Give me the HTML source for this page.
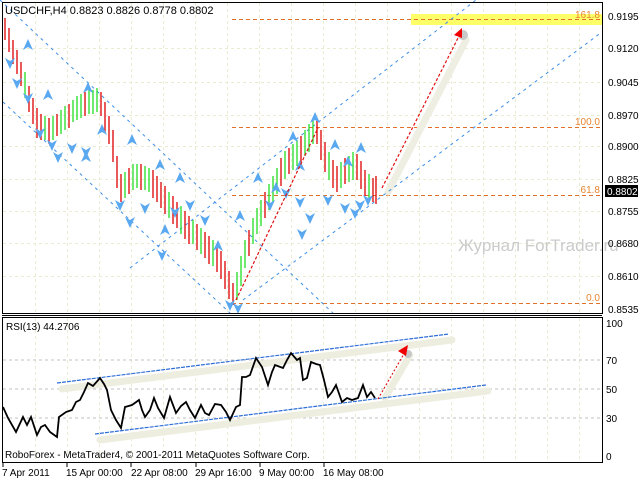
<!DOCTYPE html>
<html><head><meta charset="utf-8"><style>
html,body{margin:0;padding:0;background:#fff;width:640px;height:480px;overflow:hidden}
svg{display:block;font-family:"Liberation Sans",sans-serif}
</style></head><body>
<svg width="640" height="480" viewBox="0 0 640 480" xmlns="http://www.w3.org/2000/svg" xmlns:xlink="http://www.w3.org/1999/xlink">
<defs>
<polygon id="u" points="-5,5 0,-6 5,5 0,2" fill="#5aa8f0"/>
<polygon id="d" points="-5,-5 0,6 5,-5 0,-2" fill="#5aa8f0"/>
</defs>
<rect width="640" height="480" fill="#fff"/>
<g stroke="#ebebd2" stroke-dasharray="3,3" stroke-width="1" fill="none">
<path d="M3 48.5H602M3 82.5H602M3 115.5H602M3 146.5H602M3 179.5H602M3 211.5H602M3 243.5H602M3 276.5H602"/>
<path d="M35.5 3V313M67.5 3V313M99.5 3V313M131.5 3V313M163.5 3V313M195.5 3V313M227.5 3V313M259.5 3V313M291.5 3V313M323.5 3V313M355.5 3V313M387.5 3V313M419.5 3V313M451.5 3V313M483.5 3V313M515.5 3V313M547.5 3V313M579.5 3V313"/>
<path d="M35.5 318V462M67.5 318V462M99.5 318V462M131.5 318V462M163.5 318V462M195.5 318V462M227.5 318V462M259.5 318V462M291.5 318V462M323.5 318V462M355.5 318V462M387.5 318V462M419.5 318V462M451.5 318V462M483.5 318V462M515.5 318V462M547.5 318V462M579.5 318V462"/>
</g>
<rect x="411" y="14" width="191" height="11" fill="#ffff4d" opacity="0.85"/>
<g stroke="#e0702a" stroke-dasharray="4,3" stroke-width="1">
<line x1="232" y1="19.5" x2="600" y2="19.5"/>
<line x1="232" y1="127.5" x2="600" y2="127.5"/>
<line x1="232" y1="195.5" x2="600" y2="195.5"/>
<line x1="232" y1="303.5" x2="600" y2="303.5"/>
</g>
<g fill="#e8842f" font-size="10" text-anchor="end">
<text x="600" y="18">161.8</text><text x="600" y="125">100.0</text>
<text x="600" y="193">61.8</text><text x="600" y="301">0.0</text>
</g>
<text x="458" y="251" font-size="17" fill="#cbcbcb">Журнал ForTrader.ru</text>
<line x1="388" y1="192" x2="466" y2="40" stroke="#eeeee2" stroke-width="7" stroke-linecap="round"/>
<circle cx="463" cy="35" r="5" fill="#c8c8c8"/>
<g stroke="#3c8ee8" stroke-dasharray="3,4" stroke-width="1" fill="none">
<line x1="0" y1="0" x2="335" y2="315"/>
<line x1="3" y1="102" x2="230" y2="313"/>
<line x1="130" y1="268" x2="476" y2="0"/>
<line x1="243" y1="300" x2="602" y2="32"/>
</g>
<path stroke="#dd0000" stroke-width="1.3" fill="none" d="M5 18V40M9 28V52M13 40V64M17 50V74M21 62V86M29 86V112M33 98V124M37 108V138M41 114V140M49 118V144M57 114V136M69 104V128M85 92V116M101 92V116M105 102V132M109 116V144M113 130V162M117 156V188M121 174V202M129 168V194M141 164V190M153 170V198M157 176V202M161 182V208M165 186V214M173 196V224M177 202V228M185 211V239M189 216V244M197 224V250M205 232V258M209 236V264M217 244V272M221 251V279M225 261V289M229 271V299M233 283V305M249 230V256M265 192V218M281 158V186M289 148V174M301 136V162M317 118V144M321 130V160M325 142V172M333 160V188M337 166V192M345 158V184M357 154V180M361 161V189M365 170V196M373 178V202M376 176V204"/>
<path stroke="#22dd22" stroke-width="1.3" fill="none" d="M25 72V98M45 116V140M53 116V140M61 110V134M65 106V130M73 100V122M77 96V120M81 94V118M89 90V114M93 90V114M97 88V112M125 172V198M133 164V190M137 164V188M145 166V190M149 168V192M169 192V218M181 206V234M193 220V244M201 228V254M213 240V266M237 272V300M241 256V286M245 240V268M253 218V244M257 208V234M261 200V226M269 184V210M273 176V202M277 168V194M285 151V179M293 144V170M297 140V166M305 130V156M309 124V152M313 120V144M329 152V180M341 162V188M349 156V182M353 152V180M369 174V200"/>
<g>
<use xlink:href="#u" x="28" y="45"/><use xlink:href="#u" x="48" y="95"/><use xlink:href="#u" x="88" y="88"/><use xlink:href="#u" x="86" y="157"/><use xlink:href="#u" x="102" y="130"/><use xlink:href="#u" x="132" y="140"/><use xlink:href="#u" x="160" y="165"/><use xlink:href="#u" x="165" y="230"/><use xlink:href="#u" x="180" y="178"/><use xlink:href="#u" x="258" y="178"/><use xlink:href="#u" x="276" y="188"/><use xlink:href="#u" x="300" y="166"/><use xlink:href="#u" x="293" y="137"/><use xlink:href="#u" x="315" y="118"/><use xlink:href="#u" x="335" y="145"/><use xlink:href="#u" x="348" y="162"/><use xlink:href="#u" x="361" y="148"/><use xlink:href="#u" x="218" y="246"/><use xlink:href="#u" x="240" y="216"/>
<use xlink:href="#d" x="10" y="63"/><use xlink:href="#d" x="17" y="83"/><use xlink:href="#d" x="28" y="98"/><use xlink:href="#d" x="40" y="133"/><use xlink:href="#d" x="52" y="145"/><use xlink:href="#d" x="58" y="157"/><use xlink:href="#d" x="72" y="148"/><use xlink:href="#d" x="86" y="152"/><use xlink:href="#d" x="120" y="205"/><use xlink:href="#d" x="130" y="222"/><use xlink:href="#d" x="145" y="208"/><use xlink:href="#d" x="162" y="255"/><use xlink:href="#d" x="175" y="212"/><use xlink:href="#d" x="190" y="205"/><use xlink:href="#d" x="205" y="220"/><use xlink:href="#d" x="230" y="305"/><use xlink:href="#d" x="238" y="308"/><use xlink:href="#d" x="270" y="205"/><use xlink:href="#d" x="286" y="193"/><use xlink:href="#d" x="300" y="202"/><use xlink:href="#d" x="302" y="234"/><use xlink:href="#d" x="310" y="218"/><use xlink:href="#d" x="328" y="200"/><use xlink:href="#d" x="345" y="208"/><use xlink:href="#d" x="355" y="213"/><use xlink:href="#d" x="360" y="205"/><use xlink:href="#d" x="368" y="200"/>
</g>
<g stroke="#e01010" stroke-dasharray="3,2" stroke-width="1.2">
<line x1="236" y1="300" x2="318" y2="128"/>
<line x1="382" y1="188" x2="459" y2="36"/>
</g>
<polygon points="462,28 454,35 462,38" fill="#f00000"/>
<rect x="2.5" y="2.5" width="600" height="311" fill="none" stroke="#000"/>
<line x1="2" y1="315.5" x2="602" y2="315.5" stroke="#000"/>
<text x="5" y="14" font-size="11" fill="#000">USDCHF,H4  0.8823 0.8826 0.8778 0.8802</text>
<g font-size="10" fill="#000">
<text x="608" y="20">0.9195</text><text x="608" y="52">0.9120</text><text x="608" y="86">0.9045</text>
<text x="608" y="119">0.8970</text><text x="608" y="150">0.8900</text><text x="608" y="183">0.8825</text>
<text x="608" y="215">0.8755</text><text x="608" y="247">0.8680</text><text x="608" y="280">0.8610</text>
<text x="608" y="313">0.8535</text>
</g>
<rect x="605" y="185" width="33" height="12" fill="#000"/>
<text x="607" y="195" font-size="10" fill="#fff">0.8802</text>
<rect x="2.5" y="317.5" width="600" height="145" fill="none" stroke="#000"/>
<g stroke="#c0c0c0" stroke-dasharray="3,3"><line x1="3" y1="360" x2="602" y2="360"/><line x1="3" y1="389" x2="602" y2="389"/><line x1="3" y1="418" x2="602" y2="418"/></g>
<g stroke="#eeeee0" stroke-width="7" stroke-linecap="round">
<line x1="62" y1="389" x2="452" y2="340"/>
<line x1="100" y1="440" x2="488" y2="391"/>
<line x1="385" y1="398" x2="410" y2="355"/>
</g>
<circle cx="408" cy="354" r="4" fill="#c8c8c8"/>
<g stroke="#2f6fd8" stroke-dasharray="4,1" stroke-width="1.2">
<line x1="57" y1="383" x2="449" y2="334"/>
<line x1="95" y1="434" x2="486" y2="385"/>
</g>
<polyline fill="none" stroke="#000" stroke-width="1.8" points="3,407 8,418 16,432 23,417 27,425 31,417 37,435 41,427 45,425 50,432 57,437 59,417 66,412 72,410 76,402 80,400 84,392 88,383 93,386 100,378 104,384 107,390 111,410 116,420 121,428 125,407 132,405 139,400 142,410 145,417 150,410 154,398 158,408 164,418 170,397 176,413 181,406 186,402 190,410 195,418 201,405 205,413 209,415 215,404 221,405 226,412 230,420 236,407 240,405 242,377 246,377 250,375 256,358 262,367 268,385 272,372 275,365 283,368 287,360 291,353 297,360 300,358 303,380 307,378 311,362 316,364 320,365 324,380 328,397 332,392 336,385 342,402 347,398 352,400 358,398 363,385 367,397 371,392 375,398"/>
<line x1="378" y1="399" x2="405" y2="352" stroke="#e01010" stroke-dasharray="2,2" stroke-width="1.1"/>
<polygon points="408,345 398,351 406,356" fill="#f00000"/>
<text x="6" y="330" font-size="10">RSI(13) 44.2706</text>
<text x="5" y="458" font-size="10">RoboForex - MetaTrader4, © 2001-2011 MetaQuotes Software Corp.</text>
<g font-size="10"><text x="606" y="327">100</text><text x="606" y="364">70</text><text x="606" y="393">50</text><text x="606" y="422">30</text><text x="606" y="460">0</text></g>
<path stroke="#000" d="M3 463V467M67 463V467M131 463V467M196 463V467M260 463V467M324 463V467"/>
<g font-size="10"><text x="2" y="476">7 Apr 2011</text><text x="66" y="476">15 Apr 00:00</text><text x="131" y="476">22 Apr 08:00</text><text x="195" y="476">29 Apr 16:00</text><text x="259" y="476">9 May 00:00</text><text x="323" y="476">16 May 08:00</text></g>
</svg>
</body></html>
